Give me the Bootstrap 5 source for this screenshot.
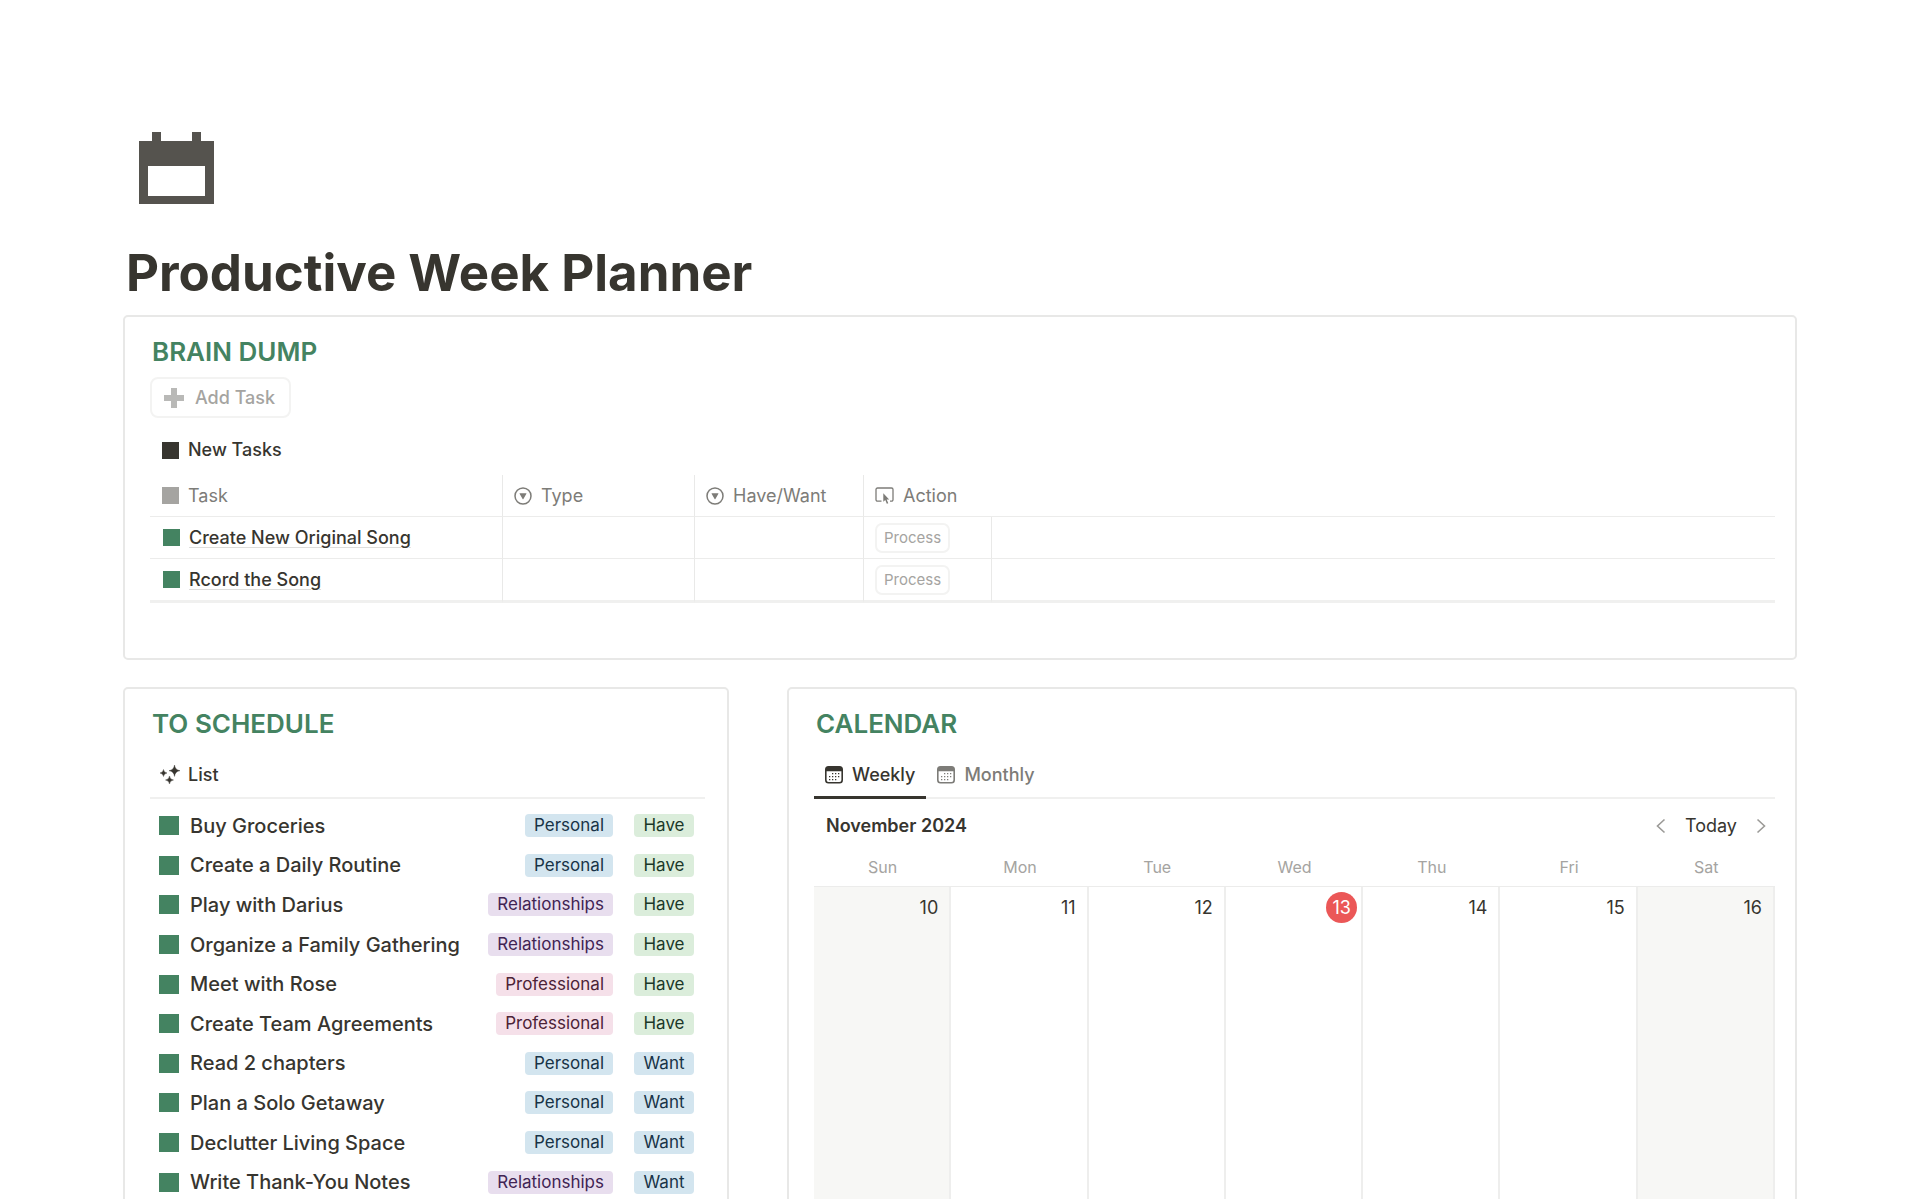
<!DOCTYPE html>
<html lang="en">
<head>
<meta charset="utf-8">
<meta name="viewport" content="width=device-width, initial-scale=1">
<title>Productive Week Planner</title>
<link href="https://cdn.jsdelivr.net/npm/bootstrap@5.3.0/dist/css/bootstrap.min.css" rel="stylesheet">
<style>
  :root { --ink: #37352f; --soft: #7d7c78; --faint: #a5a4a1; --line: #ececeb; --green: #448361; }
  body { font-family: Inter, "Liberation Sans", sans-serif; font-size: 18px; line-height: 24px; color: var(--ink); background: #fff; }
  svg { display: block; flex: none; }
  .planner { padding: 132px 123px 0; }
  .page-icon { margin-left: 16px; }
  .page-title { font-size: 51px; line-height: 64px; font-weight: 700; margin: 37px 0 10px 3px; }
  .panel { border: 2px solid #e8e8e7; border-radius: 5px; padding: 21px 20px 0 25px; background: #fff; }
  .panel-title { font-size: 26px; line-height: 28px; font-weight: 600; color: var(--green); margin: 0 0 0 2px; }
  .brain-dump { padding-bottom: 55px; }
  .lower { display: grid; grid-template-columns: 3fr 5fr; gap: 58px; margin-top: 27px; }
  .lower .panel { min-height: 520px; padding-bottom: 40px; }
  .lower .panel-sched { padding-right: 22px; }
  .add-btn { height: 41px; margin-top: 11px; padding: 0 14px 0 12px; gap: 11px; border: 2px solid #f3f3f2; border-radius: 8px; background: #fff; color: var(--faint); font-weight: 500; }
  .view-btn { border: 0; background: none; color: var(--ink); font-weight: 500; padding: 0; gap: 9px; }
  .view-new { margin: 20px 0 13px 12px; }
  .sq { display: block; width: 17px; height: 17px; background: var(--green); flex: none; }
  .sq-dark { background: var(--ink); }
  .sq-gray { background: var(--faint); }
  .sq-lg { width: 20px; height: 19px; }

  .task-table { width: 100%; table-layout: fixed; border-collapse: separate; border-spacing: 0; }
  .task-table th, .task-table td { height: 42px; padding: 0 0 0 11px; border-bottom: 1px solid var(--line); border-right: 1px solid #e9e9e8; vertical-align: middle; font-weight: 400; }
  .task-table th { color: var(--soft); }
  .task-table th:first-child, .task-table td:first-child { padding-left: 12px; }
  .task-table th:nth-child(n+4), .task-table td:last-child { border-right: 0; }
  .task-table tbody tr:last-child td { height: 44px; border-bottom: 3px solid #f0f0ef; }
  .task-table .head-cell, .task-table .row-cell { display: flex; align-items: center; gap: 9px; }
  .task-table .row-cell { padding-left: 1px; }
  .w-task { width: 353px; } .w-type { width: 192px; } .w-have { width: 169px; } .w-action { width: 128px; }
  .task-link { color: var(--ink); font-weight: 500; text-decoration: underline; text-decoration-color: #dededc; text-decoration-thickness: 1px; text-underline-offset: 3px; }
  .process-btn { display: block; height: 30px; padding: 0 7px; border: 2px solid #f3f3f2; border-radius: 7px; background: #fff; color: var(--faint); font-size: 15px; line-height: 20px; }

  .tabs { height: 51px; margin-top: 10px; border-bottom: 2px solid #f0f0ef; }
  .tab { display: flex; align-items: center; height: 51px; border: 0; border-bottom: 3px solid transparent; padding: 5px 11px 0; gap: 9px; background: none; color: var(--soft); font-weight: 500; }
  .tab-on { color: var(--ink); border-bottom-color: var(--ink); }
  .tab-list { gap: 8px; padding-left: 10px; color: var(--ink); }
  .sched { display: grid; grid-template-rows: repeat(10, 1fr); height: 396px; margin: 7px 0 0; padding: 0 11px 0 9px; }
  .sched-name { font-size: 20px; font-weight: 500; margin-left: 11px; }
  .tag { font-size: 17px; line-height: 23px; padding: 0 9px; border-radius: 4px; }
  .tag-blue { background: #d3e5ef; color: #183347; }
  .tag-green { background: #dbeddb; color: #1c3829; }
  .tag-purple { background: #e8deee; color: #412454; }
  .tag-pink { background: #f5e0e9; color: #4c2337; }
  .tag-kind { width: 60px; margin-left: 21px; text-align: center; padding: 0; }

  .cal-bar { margin: 15px 8px 0 12px; }
  .cal-month { font-weight: 600; }
  .cal-nav { border: 0; background: none; padding: 0; color: var(--ink); }
  .cal { width: 100%; table-layout: fixed; margin-top: 9px; border-collapse: separate; border-spacing: 0; }
  .cal th { height: 40px; font-size: 16px; font-weight: 400; color: var(--faint); text-align: center; border-bottom: 1px solid var(--line); vertical-align: middle; }
  .cal td { height: 400px; text-align: right; vertical-align: top; padding: 5px 4px 0 0; border-right: 2px solid #eeeeed; }
  .cal td.off { background: #f7f7f5; }
  .day { display: inline-block; min-width: 31px; line-height: 31px; padding-right: 7px; text-align: right; }
  .today { background: #eb5757; color: #fff; border-radius: 50%; text-align: center; padding: 0; }
</style>
<script src="https://cdn.jsdelivr.net/npm/bootstrap@5.3.0/dist/js/bootstrap.bundle.min.js"></script>
</head>
<body>
<svg class="d-none" aria-hidden="true">
  <symbol id="i-select" viewBox="0 0 18 18"><circle cx="9" cy="9" r="8" fill="none" stroke="currentColor" stroke-width="1.5"/><path d="M5.9 6.200h6.200a.4.4 0 0 1 .3.6l-3 5.200a.45.45 0 0 1-.8 0l-3-5.200a.4.4 0 0 1 .3-.6z" fill="currentColor"/></symbol>
  <symbol id="i-cal" viewBox="0 0 18 18"><path fill-rule="evenodd" d="M3.500 0h11A3.500 3.500 0 0 1 18 3.500v10.500a3.500 3.500 0 0 1-3.500 3.500h-11A3.500 3.500 0 0 1 0 14V3.500A3.500 3.500 0 0 1 3.500 0zM1.600 5.200V14a1.900 1.900 0 0 0 1.900 1.900h11a1.900 1.900 0 0 0 1.900-1.900V5.200z" fill="currentColor"/><path d="M7 7h1.300v1.300H7zM10 7h1.300v1.300H10zM13 7h1.300v1.300H13zM4 10h1.300v1.300H4zM7 10h1.300v1.300H7zM10 10h1.300v1.300H10zM13 10h1.300v1.300H13zM4 13h1.300v1.300H4zM7 13h1.300v1.300H7zM10 13h1.300v1.300H10z" fill="currentColor"/></symbol>
</svg>
<main class="planner">
  <svg class="page-icon" width="75" height="72" viewBox="0 0 75 72" fill="#55534e" aria-hidden="true"><path fill-rule="evenodd" d="M13 0h9v9h31V0h9v9h13v63H0V9h13zM9 34v30h57V34z"/></svg>
  <h1 class="page-title">Productive Week Planner</h1>

  <section class="panel brain-dump">
    <h2 class="panel-title">BRAIN DUMP</h2>
    <button type="button" class="add-btn d-flex align-items-center">
      <svg width="20" height="20" viewBox="0 0 20 20" fill="#b9b9b7"><path d="M7 0h6v7h7v6h-7v7H7v-7H0V7h7z"/></svg>Add Task
    </button>
    <button type="button" class="view-btn view-new d-flex align-items-center"><span class="sq sq-dark"></span>New Tasks</button>
    <table class="task-table">
      <colgroup><col class="w-task"><col class="w-type"><col class="w-have"><col class="w-action"><col></colgroup>
      <thead>
        <tr>
          <th scope="col"><span class="head-cell"><span class="sq sq-gray"></span>Task</span></th>
          <th scope="col"><span class="head-cell"><svg width="18" height="18"><use href="#i-select"/></svg>Type</span></th>
          <th scope="col"><span class="head-cell"><svg width="18" height="18"><use href="#i-select"/></svg>Have/Want</span></th>
          <th scope="col"><span class="head-cell"><svg width="19" height="17" viewBox="0 0 19 17"><path d="M6.500 14.200H2.500A1.500 1.500 0 0 1 1 12.700V2.500A1.500 1.500 0 0 1 2.500 1h14A1.500 1.500 0 0 1 18 2.500v10.200a1.500 1.500 0 0 1-1.500 1.500H15" fill="none" stroke="currentColor" stroke-width="1.300"/><path d="M8.300 6.200v8.600l2-1.700 1.500 3.700 1.500-.6-1.600-3.600 2.500-.2z" fill="currentColor"/></svg>Action</span></th>
          <th></th>
        </tr>
      </thead>
      <tbody>
        <tr><td><span class="row-cell"><span class="sq"></span><a class="task-link" href="#">Create New Original Song</a></span></td><td></td><td></td><td><button type="button" class="process-btn">Process</button></td><td></td></tr>
        <tr><td><span class="row-cell"><span class="sq"></span><a class="task-link" href="#">Rcord the Song</a></span></td><td></td><td></td><td><button type="button" class="process-btn">Process</button></td><td></td></tr>
      </tbody>
    </table>
  </section>

  <div class="lower">
    <section class="panel panel-sched">
      <h2 class="panel-title">TO SCHEDULE</h2>
      <div class="tabs d-flex">
        <button type="button" class="tab tab-list"><svg width="20" height="20" viewBox="0 0 20 20" fill="currentColor"><path d="M14.500 0q.6 5 5.500 5.700-4.900.7-5.500 5.700-.6-5-5.500-5.700 4.900-.7 5.500-5.700zM3.500 4.500q.4 3 3.500 3.500-3.100.5-3.500 3.500Q3.100 8.500 0 8 3.100 7.500 3.500 4.500zM9.500 11q.4 3.500 4 4-3.600.5-4 4-.4-3.500-4-4 3.600-.5 4-4z" stroke="currentColor" stroke-width=".4"/></svg>List</button>
      </div>
      <ul class="sched list-unstyled">
        <li class="d-flex align-items-center"><span class="sq sq-lg"></span><span class="sched-name">Buy Groceries</span><span class="tag tag-blue ms-auto">Personal</span><span class="tag tag-green tag-kind">Have</span></li>
        <li class="d-flex align-items-center"><span class="sq sq-lg"></span><span class="sched-name">Create a Daily Routine</span><span class="tag tag-blue ms-auto">Personal</span><span class="tag tag-green tag-kind">Have</span></li>
        <li class="d-flex align-items-center"><span class="sq sq-lg"></span><span class="sched-name">Play with Darius</span><span class="tag tag-purple ms-auto">Relationships</span><span class="tag tag-green tag-kind">Have</span></li>
        <li class="d-flex align-items-center"><span class="sq sq-lg"></span><span class="sched-name">Organize a Family Gathering</span><span class="tag tag-purple ms-auto">Relationships</span><span class="tag tag-green tag-kind">Have</span></li>
        <li class="d-flex align-items-center"><span class="sq sq-lg"></span><span class="sched-name">Meet with Rose</span><span class="tag tag-pink ms-auto">Professional</span><span class="tag tag-green tag-kind">Have</span></li>
        <li class="d-flex align-items-center"><span class="sq sq-lg"></span><span class="sched-name">Create Team Agreements</span><span class="tag tag-pink ms-auto">Professional</span><span class="tag tag-green tag-kind">Have</span></li>
        <li class="d-flex align-items-center"><span class="sq sq-lg"></span><span class="sched-name">Read 2 chapters</span><span class="tag tag-blue ms-auto">Personal</span><span class="tag tag-blue tag-kind">Want</span></li>
        <li class="d-flex align-items-center"><span class="sq sq-lg"></span><span class="sched-name">Plan a Solo Getaway</span><span class="tag tag-blue ms-auto">Personal</span><span class="tag tag-blue tag-kind">Want</span></li>
        <li class="d-flex align-items-center"><span class="sq sq-lg"></span><span class="sched-name">Declutter Living Space</span><span class="tag tag-blue ms-auto">Personal</span><span class="tag tag-blue tag-kind">Want</span></li>
        <li class="d-flex align-items-center"><span class="sq sq-lg"></span><span class="sched-name">Write Thank-You Notes</span><span class="tag tag-purple ms-auto">Relationships</span><span class="tag tag-blue tag-kind">Want</span></li>
      </ul>
    </section>

    <section class="panel">
      <h2 class="panel-title">CALENDAR</h2>
      <div class="tabs d-flex">
        <button type="button" class="tab tab-on"><svg width="18" height="18"><use href="#i-cal"/></svg>Weekly</button>
        <button type="button" class="tab"><svg width="18" height="18"><use href="#i-cal"/></svg>Monthly</button>
      </div>
      <div class="cal-bar d-flex align-items-center justify-content-between">
        <span class="cal-month">November 2024</span>
        <span class="d-flex align-items-center gap-3">
          <button type="button" class="cal-nav" aria-label="Previous week"><svg width="14" height="16" viewBox="0 0 14 16" fill="none" stroke="#9b9a97" stroke-width="1.600"><path d="M9.500 1.500 2.500 8l7 6.500"/></svg></button>
          <button type="button" class="cal-nav">Today</button>
          <button type="button" class="cal-nav" aria-label="Next week"><svg width="14" height="16" viewBox="0 0 14 16" fill="none" stroke="#9b9a97" stroke-width="1.600"><path d="M4.500 1.500 11.500 8l-7 6.500"/></svg></button>
        </span>
      </div>
      <table class="cal">
        <thead><tr><th scope="col">Sun</th><th scope="col">Mon</th><th scope="col">Tue</th><th scope="col">Wed</th><th scope="col">Thu</th><th scope="col">Fri</th><th scope="col">Sat</th></tr></thead>
        <tbody><tr>
          <td class="off"><span class="day">10</span></td><td><span class="day">11</span></td><td><span class="day">12</span></td><td><span class="day today">13</span></td><td><span class="day">14</span></td><td><span class="day">15</span></td><td class="off"><span class="day">16</span></td>
        </tr></tbody>
      </table>
    </section>
  </div>
</main>
</body>
</html>
